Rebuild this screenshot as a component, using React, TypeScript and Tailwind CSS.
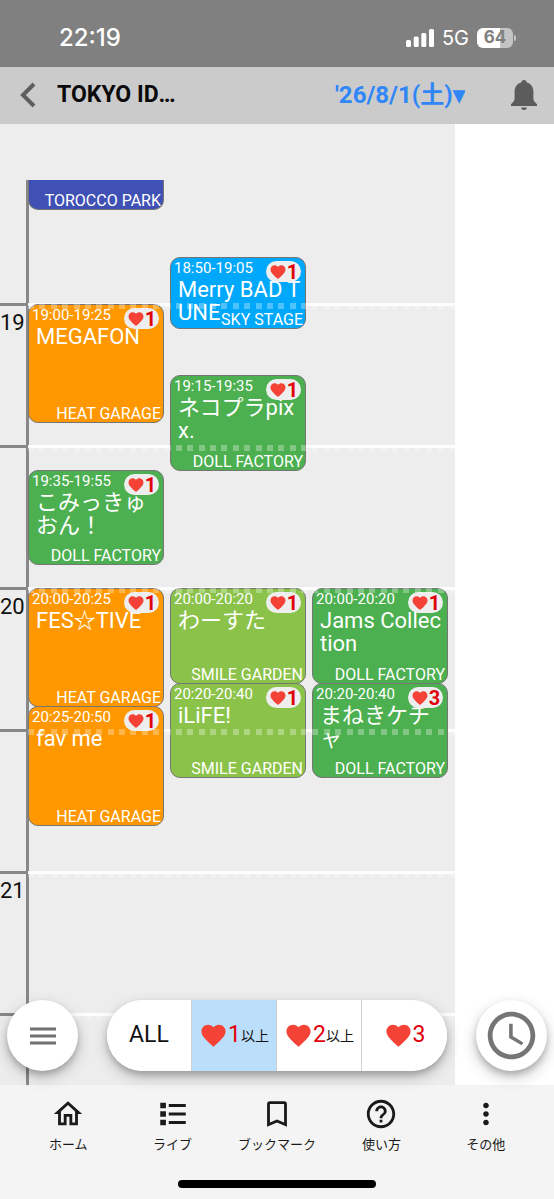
import { useState } from "react";
import { MdAccessTime, MdFavorite, MdHelpOutline, MdMoreVert, MdOutlineHome } from "react-icons/md";

interface Live {
  id: number;
  start: string;
  end: string;
  title: string;
  venue: string;
  color: string;
  likes: number;
}

const HOUR_HEIGHT = 284;
const BASE_HOUR = 19;
const BASE_OFFSET = 124;

const columns: Live[][] = [
  [
    { id: 1, start: "18:20", end: "18:40", title: "", venue: "TOROCCO PARK", color: "bg-[#3f51b5]", likes: 0 },
    { id: 2, start: "19:00", end: "19:25", title: "MEGAFON", venue: "HEAT GARAGE", color: "bg-[#ff9800]", likes: 1 },
    { id: 3, start: "19:35", end: "19:55", title: "こみっきゅおん！", venue: "DOLL FACTORY", color: "bg-[#4caf50]", likes: 1 },
    { id: 4, start: "20:00", end: "20:25", title: "FES☆TIVE", venue: "HEAT GARAGE", color: "bg-[#ff9800]", likes: 1 },
    { id: 5, start: "20:25", end: "20:50", title: "fav me", venue: "HEAT GARAGE", color: "bg-[#ff9800]", likes: 1 },
  ],
  [
    { id: 6, start: "18:50", end: "19:05", title: "Merry BAD TUNE", venue: "SKY STAGE", color: "bg-[#00a8fb]", likes: 1 },
    { id: 7, start: "19:15", end: "19:35", title: "ネコプラpixx.", venue: "DOLL FACTORY", color: "bg-[#4caf50]", likes: 1 },
    { id: 8, start: "20:00", end: "20:20", title: "わーすた", venue: "SMILE GARDEN", color: "bg-[#8bc34a]", likes: 1 },
    { id: 9, start: "20:20", end: "20:40", title: "iLiFE!", venue: "SMILE GARDEN", color: "bg-[#8bc34a]", likes: 1 },
  ],
  [
    { id: 10, start: "20:00", end: "20:20", title: "Jams Collection", venue: "DOLL FACTORY", color: "bg-[#4caf50]", likes: 1 },
    { id: 11, start: "20:20", end: "20:40", title: "まねきケチャ", venue: "DOLL FACTORY", color: "bg-[#4caf50]", likes: 3 },
  ],
];

// one entry per half hour, empty for the :30 lines
const slots = ["19", "", "20", "", "21", ""];

const filters = [
  { value: 0, label: "ALL", suffix: "" },
  { value: 1, label: "1", suffix: "以上" },
  { value: 2, label: "2", suffix: "以上" },
  { value: 3, label: "3", suffix: "" },
];

const toY = (time: string) => {
  const [h, m] = time.split(":").map(Number);
  return BASE_OFFSET + Math.round(((h - BASE_HOUR) * 60 + m) * (HOUR_HEIGHT / 60));
};

function LiveCard({ live }: { live: Live }) {
  const top = Math.max(0, toY(live.start));
  const height = toY(live.end) - top + 1;
  const cut = toY(live.start) < 0;

  return (
    <article
      className={`relative col-start-1 row-start-1 grid w-[136px] self-start overflow-hidden border-[#757575] text-white ${live.color} ${
        cut ? "rounded-b-[10px] border-x border-b" : "rounded-[10px] border"
      }`}
      style={{ marginTop: top, height }}
    >
      {!cut && (
        <div className="col-start-1 row-start-1 h-0">
          <p className="pl-[3px] text-[15px] leading-5">
            {live.start}-{live.end}
          </p>
          <h2 className="pl-[7px] text-[22px] leading-[23px] break-all">{live.title}</h2>
        </div>
      )}
      <p className="col-start-1 row-start-1 self-end pr-[2px] text-right text-base leading-[17px]">{live.venue}</p>
      {live.likes > 0 && (
        <span className="absolute top-[3px] right-1 flex h-[21px] w-[35px] items-center justify-center rounded-full bg-[#eee] text-xl font-bold text-[#e0000c]">
          <MdFavorite className="size-[18px] text-[#f44336]" />
          {live.likes}
        </span>
      )}
    </article>
  );
}

function DottedLine() {
  return (
    <div className="flex h-[6px] justify-between">
      {Array.from({ length: 38 }, (_, i) => (
        <span key={i} className="size-[6px] bg-white/30"></span>
      ))}
    </div>
  );
}

function Timetable() {
  return (
    <div className="flex">
      <div className="w-[29px] shrink-0 border-r-[3px] border-[#888]">
        <div className="h-[123px]"></div>
        {slots.map((slot, i) => (
          <div key={i} className="h-[142px] border-t-[3px] border-[#888] pt-[3px] text-[22px] leading-7 text-[#111]">
            {slot}
          </div>
        ))}
      </div>
      <div className="-ml-px grid flex-1">
        <div className="col-start-1 row-start-1 pt-[123px]">
          {slots.map((_, i) => (
            <div key={i} className="h-[142px] border-t-[3px] border-white/90"></div>
          ))}
        </div>
        <div className="z-10 col-start-1 row-start-1 grid grid-cols-[142px_142px_142px]">
          {columns.map((lives, i) => (
            <div key={i} className="grid content-start">
              {lives.map((live) => (
                <LiveCard key={live.id} live={live} />
              ))}
            </div>
          ))}
        </div>
        <div className="pointer-events-none z-20 col-start-1 row-start-1 pt-[123px]">
          {slots.map((_, i) => (
            <div key={i} className="h-[142px]">
              <DottedLine />
            </div>
          ))}
        </div>
      </div>
    </div>
  );
}

function StatusBar() {
  return (
    <div className="flex h-[67px] shrink-0 items-center justify-between bg-[#808080] pt-2 pr-[38px] pl-[59px] text-white">
      <span className="font-['Inter',sans-serif] text-2xl font-medium">22:19</span>
      <div className="flex items-center gap-2">
        <svg viewBox="0 0 28 18" className="h-[18px] w-7" fill="currentColor">
          <rect x="0" y="11" width="5" height="7" rx="1.5" />
          <rect x="7.7" y="7.5" width="5" height="10.5" rx="1.5" />
          <rect x="15.3" y="4" width="5" height="14" rx="1.5" />
          <rect x="23" y="0" width="5" height="18" rx="1.5" />
        </svg>
        <span className="font-['Inter',sans-serif] text-xl">5G</span>
        <div className="flex items-center gap-px">
          <span className="flex h-5 w-9 items-center justify-center rounded-md bg-linear-to-r from-white from-65% to-[#c4c4c4] to-65% font-['Inter',sans-serif] text-[17px] font-bold text-[#808080]">
            64
          </span>
          <span className="h-[6px] w-[2px] rounded-r bg-[#c4c4c4]"></span>
        </div>
      </div>
    </div>
  );
}

function Header() {
  return (
    <header className="flex h-[57px] shrink-0 items-center bg-[#cbcbcb] pr-4 pb-[2px] pl-5">
      <button type="button" aria-label="戻る">
        <svg viewBox="0 0 16 26" className="h-[26px] w-4" fill="none" stroke="#5e5e5e" strokeWidth="4">
          <path d="M14 2 3 13l11 11" />
        </svg>
      </button>
      <h1 className="ml-[21px] w-[130px] truncate text-[23px] leading-8 font-bold text-[#0a0a0a]">TOKYO IDOL FESTIVAL</h1>
      <select aria-label="日付" className="ml-auto appearance-none text-2xl leading-8 font-bold text-[#2f86f6]">
        <option>'26/8/1(土)▾</option>
      </select>
      <button type="button" aria-label="通知" className="ml-[45px]">
        <svg viewBox="0 0 28 30" className="h-[30px] w-7 text-[#5c5c5c]" fill="currentColor">
          <path d="M14 0c-1.600 0-2.600 1-2.800 2.400C7 3.600 4.600 7 4.600 11.500v6.800c0 1.800-.7 2.900-1.700 4L1 24.300V26h26v-1.700l-1.900-2c-1-1.100-1.700-2.200-1.700-4v-6.800c0-4.500-2.400-7.900-6.600-9.100C16.600 1 15.600 0 14 0z" />
          <path d="M11 27.400h6c-.3 1.500-1.500 2.600-3 2.600s-2.700-1.100-3-2.600z" />
        </svg>
      </button>
    </header>
  );
}

const fabShadow = "shadow-[0_4px_6px_rgba(0,0,0,0.2),0_6px_16px_rgba(0,0,0,0.2)]";

function FloatingControls() {
  const [filter, setFilter] = useState(1);

  return (
    <div className="absolute inset-x-0 bottom-[14px] z-30 flex items-center justify-between px-[7px]">
      <button
        type="button"
        aria-label="メニュー"
        className={`flex size-[71px] items-center justify-center rounded-full bg-white ${fabShadow}`}
      >
        <svg viewBox="0 0 26 18" className="h-[18px] w-[26px]" stroke="#707070" strokeWidth="2.8">
          <path d="M0 2h26M0 9h26M0 16h26" />
        </svg>
      </button>
      <div className={`flex h-[71px] divide-x divide-[#d0d0d0] overflow-hidden rounded-full bg-white ${fabShadow}`}>
        {filters.map((f) => (
          <button
            key={f.value}
            type="button"
            aria-pressed={filter === f.value}
            onClick={() => setFilter(f.value)}
            className={`flex w-[85px] items-center justify-center ${filter === f.value ? "bg-[#bbdefb]" : "bg-white"}`}
          >
            {f.value === 0 ? (
              <span className="text-[23px] text-[#111]">{f.label}</span>
            ) : (
              <>
                <MdFavorite className="size-[29px] shrink-0 text-[#f44336]" />
                <span className="text-[23px] text-[#e0000c]">{f.label}</span>
                {f.suffix && <span className="text-sm text-[#111]">{f.suffix}</span>}
              </>
            )}
          </button>
        ))}
      </div>
      <button
        type="button"
        aria-label="現在時刻"
        className={`flex size-[71px] items-center justify-center rounded-full bg-white ${fabShadow}`}
      >
        <MdAccessTime className="size-[57px] text-[#757575]" />
      </button>
    </div>
  );
}

const navItems = [
  { label: "ホーム", icon: <MdOutlineHome className="size-[34px]" /> },
  {
    label: "ライブ",
    icon: (
      <svg viewBox="0 0 24 24" className="size-[34px]" fill="currentColor">
        <path d="M3 4h4v4H3V4zm6 1v2h12V5H9zM3 10h4v4H3v-4zm6 1v2h12v-2H9zm-6 5h4v4H3v-4zm6 1v2h12v-2H9z" />
      </svg>
    ),
  },
  {
    label: "ブックマーク",
    icon: (
      <svg viewBox="0 0 24 24" className="size-[34px]" fill="currentColor">
        <path d="M17 18l-5-2.180L7 18V5h10m0-2H7a2 2 0 0 0-2 2v16l7-3 7 3V5a2 2 0 0 0-2-2z" />
      </svg>
    ),
  },
  { label: "使い方", icon: <MdHelpOutline className="size-[34px]" /> },
  { label: "その他", icon: <MdMoreVert className="size-[34px]" /> },
];

function BottomNav() {
  return (
    <nav className="flex shrink-0 flex-col items-center bg-[#f4f4f4] pt-3 pb-[11px] text-[#1a1a1a]">
      <div className="grid w-full grid-cols-5 px-4">
        {navItems.map((item) => (
          <a key={item.label} href="#" className="flex flex-col items-center gap-1">
            {item.icon}
            <span className="text-[13px] leading-5 whitespace-nowrap">{item.label}</span>
          </a>
        ))}
      </div>
      <div className="mt-[25px] h-2 w-[198px] rounded-full bg-black"></div>
    </nav>
  );
}

export default function App() {
  return (
    <div className="flex h-screen flex-col bg-white font-['Roboto','Noto_Sans_CJK_JP',sans-serif]">
      <StatusBar />
      <Header />
      <main className="relative min-h-0 flex-1">
        <div className="flex h-full w-[455px] flex-col bg-[#ededed]">
          <div className="h-14 shrink-0"></div>
          <div className="min-h-0 flex-1 overflow-y-auto [scrollbar-width:none]">
            <Timetable />
          </div>
        </div>
        <FloatingControls />
      </main>
      <BottomNav />
    </div>
  );
}
